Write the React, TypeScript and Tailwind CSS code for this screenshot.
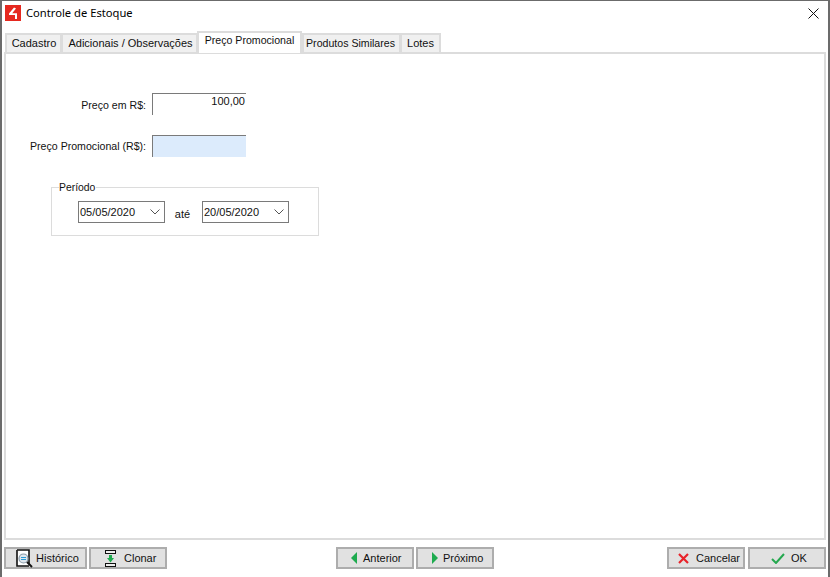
const tabs = [
  { label: 'Cadastro', w: 'w-[57px]', size: 'text-[11px] pl-[1px]' },
  { label: 'Adicionais / Observações', w: 'w-[137px]', size: 'text-[11px] pl-[2px]' },
  { label: 'Preço Promocional', w: 'w-[105px]', size: 'text-[10.6px]', active: true },
  { label: 'Produtos Similares', w: 'w-[99px]', size: 'text-[10.6px] pr-[2px]' },
  { label: 'Lotes', w: 'w-[41px]', size: 'text-[11px]' },
];

function LogoIcon() {
  return (
    <svg width="16" height="16" viewBox="0 0 16 16" className="shrink-0">
      <rect width="16" height="16" fill="#e5281f" />
      <path d="M9 2.5 L4 8.5 V10 H10 V14 H12 V8.2 H7.2 L11 3.5 Z" fill="#fff" />
    </svg>
  );
}

function HistoryIcon() {
  return (
    <svg width="17" height="19" viewBox="0 0 17 19" className="shrink-0">
      <path d="M1 1 H13 V15" fill="#fff" stroke="#111" strokeWidth="1.6" />
      <path d="M1 1 V17 H13" fill="#fff" stroke="#111" strokeWidth="1.6" />
      <circle cx="7.5" cy="9.5" r="4.5" fill="#dfe7ee" stroke="#8a9aa8" strokeWidth="1.2" />
      <path d="M5 8.5 H10 M5 10.5 H10" stroke="#2a9bd8" strokeWidth="1" />
      <path d="M11 13 L16 18" stroke="#111" strokeWidth="2" />
    </svg>
  );
}

function CloneIcon() {
  return (
    <svg width="11" height="17" viewBox="0 0 11 17" className="shrink-0">
      <rect x="0.5" y="0.5" width="10" height="3" fill="#eee" stroke="#111" />
      <rect x="0.5" y="13.5" width="10" height="3" fill="#eee" stroke="#111" />
      <path d="M4 5 H7 V8 H9 L5.5 12.5 L2 8 H4 Z" fill="#1eab4f" />
    </svg>
  );
}

function FooterButton({ label, width, icon, pad }: { label: string; width: string; icon: React.ReactNode; pad: string }) {
  return (
    <button className={`${width} ${pad} h-[22px] flex items-center bg-[#e1e1e1] border-2 border-[#adadad] text-[11px] text-[#111]`}>
      {icon}
      <span>{label}</span>
    </button>
  );
}

function DateSelect({ value }: { value: string }) {
  return (
    <div className="w-[87px] h-[22px] flex items-center justify-between bg-white border border-[#7a7a7a] pl-[1px] pr-[3px] text-[11px] text-[#111]">
      <span>{value}</span>
      <svg width="10" height="6" viewBox="0 0 10 6" className="mr-[1px]">
        <path d="M0.5 0.5 L5 5 L9.5 0.5" fill="none" stroke="#555" strokeWidth="1" />
      </svg>
    </div>
  );
}

export default function App() {
  return (
    <div className="w-[830px] h-[577px] flex flex-col bg-white border-l-2 border-r-2 border-t border-[#6b6b6b] overflow-hidden font-['Liberation_Sans',Arial,sans-serif] text-[#111]">
      {/* titulo */}
      <div className="h-[24px] flex items-center pl-[3px] pr-[9px] shrink-0">
        <LogoIcon />
        <span className="ml-[5px] text-[11.2px] font-['Noto_Sans',sans-serif] text-black">Controle de Estoque</span>
        <svg width="11" height="11" viewBox="0 0 11 11" className="ml-auto">
          <path d="M0.5 0.5 L10.5 10.5 M10.5 0.5 L0.5 10.5" stroke="#111" strokeWidth="1" />
        </svg>
      </div>

      {/* abas */}
      <div className="h-[27px] flex items-end pl-[3px] shrink-0 relative z-10">
        {tabs.map((t) =>
          t.active ? (
            <div
              key={t.label}
              className={`${t.w} ${t.size} h-[22px] -mb-[1px] flex items-start justify-center bg-white border-2 border-b-0 border-[#dcdcdc]`}
            >
              {t.label}
            </div>
          ) : (
            <div
              key={t.label}
              className={`${t.w} ${t.size} h-[19px] flex items-center justify-center bg-[#f0f0f0] border-2 border-b-0 border-[#dcdcdc] -mr-[1px]`}
            >
              {t.label}
            </div>
          )
        )}
      </div>

      {/* painel */}
      <div className="h-[488px] mx-[2px] w-[822px] bg-white border-2 border-[#dcdcdc] pt-[39px] shrink-0 text-[10.6px]">
        <div className="flex items-start h-[22px]">
          <span className="w-[140px] text-right pt-[5px]">Preço em R$:</span>
          <div className="ml-[6px] w-[94px] h-[22px] border-l border-t border-[#7a7a7a] bg-white text-right pr-[1px] text-[11px] leading-[14px]">
            100,00
          </div>
        </div>
        <div className="flex items-start h-[22px] mt-[20px]">
          <span className="w-[140px] text-right pt-[4px]">Preço Promocional (R$):</span>
          <div className="ml-[6px] w-[94px] h-[22px] border-l border-t border-[#7a7a7a] bg-[#dcebfc]" />
        </div>
        <fieldset className="ml-[45px] mt-[24px] w-[268px] h-[55px] border border-[#dcdcdc] pl-[26px] pt-[7px]">
          <legend className="-ml-[19px] pr-[1px] text-[10.4px] leading-[13px]">Período</legend>
          <div className="flex items-center text-[11px]">
            <DateSelect value="05/05/2020" />
            <span className="ml-[9px] mr-[11px] w-[17px] text-center pt-[4px]">até</span>
            <DateSelect value="20/05/2020" />
          </div>
        </fieldset>
      </div>

      {/* botoes */}
      <div className="flex items-start mt-[7px] pl-[2px] pr-[2px]">
        <div className="flex gap-[2px]">
          <FooterButton label="Histórico" width="w-[83px]" pad="pl-[10px] gap-[3px]" icon={<HistoryIcon />} />
          <FooterButton label="Clonar" width="w-[78px]" pad="pl-[14px] gap-[8px]" icon={<CloneIcon />} />
        </div>
        <div className="flex gap-[2px] ml-[169px]">
          <FooterButton
            label="Anterior"
            width="w-[78px]"
            pad="pl-[13px] gap-[6px]"
            icon={
              <svg width="6" height="12" viewBox="0 0 6 12">
                <path d="M6 0 V12 L0 6 Z" fill="#1eab4f" />
              </svg>
            }
          />
          <FooterButton
            label="Próximo"
            width="w-[78px]"
            pad="pl-[14px] gap-[5px]"
            icon={
              <svg width="6" height="12" viewBox="0 0 6 12">
                <path d="M0 0 V12 L6 6 Z" fill="#1eab4f" />
              </svg>
            }
          />
        </div>
        <div className="flex gap-[3px] ml-[173px]">
          <FooterButton
            label="Cancelar"
            width="w-[78px]"
            pad="pl-[9px] gap-[7px]"
            icon={
              <svg width="11" height="11" viewBox="0 0 11 11">
                <path d="M1 1 L10 10 M10 1 L1 10" stroke="#e8232a" strokeWidth="2.2" />
              </svg>
            }
          />
          <FooterButton
            label="OK"
            width="w-[78px]"
            pad="pl-[21px] gap-[6px]"
            icon={
              <svg width="14" height="11" viewBox="0 0 14 11">
                <path d="M1 6 L5 10 L13 1" fill="none" stroke="#25a84f" strokeWidth="2" />
              </svg>
            }
          />
        </div>
      </div>
    </div>
  );
}
